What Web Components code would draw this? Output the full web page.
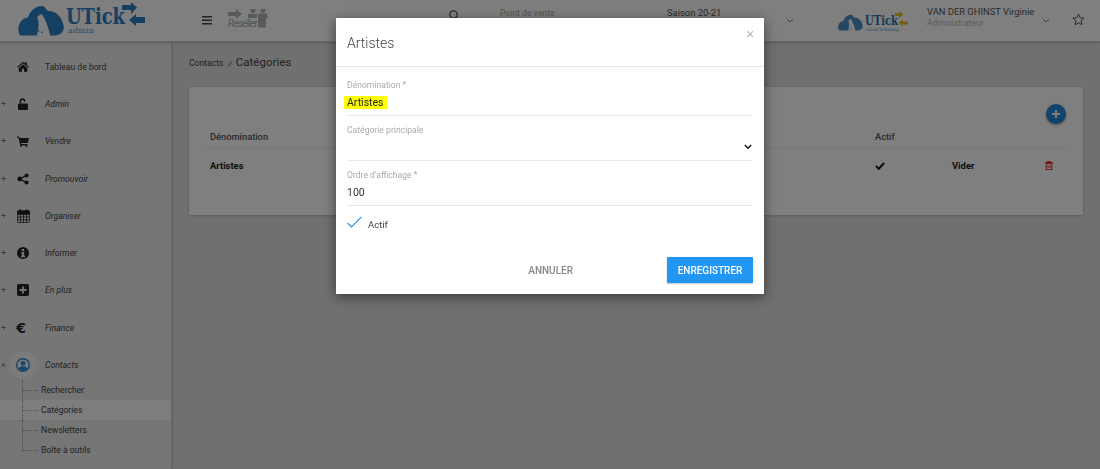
<!DOCTYPE html>
<html lang="fr">
<head>
<meta charset="utf-8">
<title>Catégories</title>
<style>
  html, body { margin: 0; height: 100%; overflow: hidden; }
  body { font-family: Roboto, "Liberation Sans", sans-serif; background: #e0e0e0; color: #333; }
  ut-layout svg { display: block; }
</style>
</head>
<body>
<ut-layout>
  <ut-header slot="header"></ut-header>
  <ut-sidebar slot="sidebar">
    <ut-nav-item label="Tableau de bord" plain>
      <svg width="12" height="11" viewBox="0 0 24 21" fill="currentColor"><path d="M12 1 0 11.500l1.400 1.600L12 4l10.600 9.100 1.400-1.600L19.500 7.600V2h-3.500v2.600zM12 6 3.500 13.300V21H10v-6h4v6h6.500v-7.700z"/></svg>
    </ut-nav-item>
    <ut-nav-item label="Admin" mark="+">
      <svg width="10" height="12" viewBox="0 0 20 24" fill="currentColor"><path d="M2 11h16a2 2 0 0 1 2 2v9a2 2 0 0 1-2 2H2a2 2 0 0 1-2-2v-9a2 2 0 0 1 2-2z"/><path d="M3.500 11V6a5.500 5.500 0 0 1 11 0v1.500h-3V6a2.500 2.500 0 0 0-5 0v5z"/></svg>
    </ut-nav-item>
    <ut-nav-item label="Vendre" mark="+">
      <svg width="12" height="11" viewBox="0 0 24 22" fill="currentColor"><path d="M0 1h4.500l.8 3H24l-2.500 10H8l.5 2H21v2.500H6.500L3 3.500H0z"/><circle cx="8.500" cy="20" r="2"/><circle cx="18.500" cy="20" r="2"/></svg>
    </ut-nav-item>
    <ut-nav-item label="Promouvoir" mark="+">
      <svg width="12" height="12" viewBox="0 0 22 22" fill="currentColor"><circle cx="5" cy="11" r="4.500"/><circle cx="17.500" cy="4.500" r="3.800"/><circle cx="17.500" cy="17.500" r="3.800"/><path d="M5 11 17.500 4.500M5 11l12.500 6.500" stroke="currentColor" stroke-width="2.400"/></svg>
    </ut-nav-item>
    <ut-nav-item label="Organiser" mark="+">
      <svg width="13" height="14" viewBox="0 0 20 22" fill="none" stroke="currentColor" stroke-width="1.200"><rect x=".7" y="3" width="18.600" height="18.300" rx="1.200"/><path d="M.7 8h18.600M.7 12.500h18.600M.7 17h18.600M5.300 8v13.300M10 8v13.300M14.700 8v13.300"/><path d="M.7 3h18.600v5H.7z" fill="currentColor"/><path d="M5 .5v4M15 .5v4" stroke-width="2"/></svg>
    </ut-nav-item>
    <ut-nav-item label="Informer" mark="+">
      <svg width="12" height="12" viewBox="0 0 20 20" fill="currentColor"><path fill-rule="evenodd" d="M10 0a10 10 0 1 0 0 20 10 10 0 0 0 0-20zM8 3.500h4v3H8zM7 8.500h5v6h1.500V17h-7v-2.500H8V11H7z"/></svg>
    </ut-nav-item>
    <ut-nav-item label="En plus" mark="+">
      <svg width="12" height="12" viewBox="0 0 20 20" fill="currentColor"><path fill-rule="evenodd" d="M3 0h14a3 3 0 0 1 3 3v14a3 3 0 0 1-3 3H3a3 3 0 0 1-3-3V3a3 3 0 0 1 3-3zm5.500 4v4.500H4v3h4.500V16h3v-4.500H16v-3h-4.500V4z"/></svg>
    </ut-nav-item>
    <ut-nav-item label="Finance" mark="+">
      <span class="euro" style="font:700 14px/14px 'DejaVu Sans',sans-serif;margin-left:-4px">€</span>
    </ut-nav-item>
    <ut-nav-item label="Contacts" mark="×" open>
      <svg width="14" height="14" viewBox="0 0 20 20" fill="none" stroke="#2f8fe0" stroke-width="2"><circle cx="10" cy="10" r="9"/><circle cx="10" cy="7.800" r="3.400" fill="#2f8fe0" stroke="none"/><path d="M3.800 15.500c1-3 3.600-3.800 6.200-3.800s5.200.8 6.200 3.800C14.500 17.500 12 18.500 10 18.500s-4.500-1-6.200-3z" fill="#2f8fe0" stroke="none"/></svg>
    </ut-nav-item>
    <ut-sub-nav>
      <ut-sub-item>Rechercher</ut-sub-item>
      <ut-sub-item active>Catégories</ut-sub-item>
      <ut-sub-item>Newsletters</ut-sub-item>
      <ut-sub-item last>Boîte à outils</ut-sub-item>
    </ut-sub-nav>
  </ut-sidebar>
  <ut-categories slot="main"></ut-categories>
</ut-layout>
<ut-modal heading="Artistes">
  <ut-field label="Dénomination *" value="Artistes" marked></ut-field>
  <ut-field label="Catégorie principale" select></ut-field>
  <ut-field label="Ordre d'affichage *" value="100"></ut-field>
  <ut-check>Actif</ut-check>
</ut-modal>

<script>
  // small helper so every component has the same shadow setup
  class Base extends HTMLElement {
    constructor() {
      super();
      this.attachShadow({ mode: 'open' });
    }
    connectedCallback() {
      this.render();
    }
  }

  const cloud = `<path d="M2.500 33C-1 30-.5 20 6 16c2-.5 3-1 4-1C12 8 18 3.500 24 3.500c3 0 4 3.500 6 5 7-.5 14 5.500 15.500 14.500C47 29 42 33 37 33h-5c-1-7-4-15-8-21-2-1.500-4 2-5 3 3 5 1 12 0 18z"/><path d="M17 26.500l1.500.7M20 28l1.500.7M23 29.500l1.500.7" stroke-width="1.200" fill="none"/>`;

  class UtLayout extends Base {
    render() {
      this.shadowRoot.innerHTML = `
        <style>
          :host { display: flex; flex-direction: column; height: 469px; }
          .body { display: flex; flex: 1; min-height: 0; }
        </style>
        <slot name="header"></slot>
        <div class="body">
          <slot name="sidebar"></slot>
          <slot name="main"></slot>
        </div>
      `;
    }
  }

  class UtHeader extends Base {
    render() {
      this.shadowRoot.innerHTML = `
        <style>
          :host { display: flex; align-items: center; height: 42px; box-sizing: border-box; background: #fff; border-bottom: 1px solid #cfcfcf; box-shadow: 0 1px 2px rgba(0,0,0,.2); position: relative; z-index: 2; flex: none; color: #555; font-size: 9.400px; }
          svg { display: block; flex: none; }
          .logo { margin-left: 18px; }
          .burger { margin-left: 56px; }
          .reseller { margin-left: 16px; }
          .search { margin-left: 179px; margin-top: -11px; }
          .pdv { margin-left: 40px; width: 167px; margin-top: -16px; color: #aaa; font-size: 8.600px; }
          .saison { width: 119px; margin-top: -16px; color: #555; }
          .chev { color: #888; }
          .small { margin-left: 44px; }
          .user { margin-left: 19px; width: 115px; line-height: 11.500px; margin-top: -6px; }
          .user div { white-space: nowrap; }
          .user .role { color: #bbb; font-size: 8.600px; }
          .star { margin-left: 22px; margin-top: -3px; }
        </style>
        <svg class="logo" width="128" height="41" viewBox="0 0 128 41">
          <g fill="#2a80c4" stroke="#2a80c4" stroke-width="0" transform="translate(0 2.500)">${cloud}</g>
          <text x="48" y="24" font-family="'DejaVu Serif', serif" font-weight="700" font-size="22" textLength="59" lengthAdjust="spacingAndGlyphs" fill="#2a80c4">UTick</text>
          <text x="50" y="33" font-family="'DejaVu Serif', serif" font-size="8" textLength="26" fill="#4f97d0">admin</text>
          <path d="M104 5h9V2l6 5.500-6 6.500v-4h-9z" fill="#2a80c4"/>
          <path d="M127 17h-9v-3l-7 6 7 6v-3h9z" fill="#2a80c4"/>
        </svg>
        <svg class="burger" width="10" height="9" viewBox="0 0 10 9" fill="#444"><path d="M0 0h10v1.600H0zM0 3.500h10v1.600H0zM0 7h10v1.600H0z"/></svg>
        <svg class="reseller" width="42" height="24" viewBox="0 0 42 24" fill="#b4b4b4">
          <path d="M0 3h8V0l6 5-6 5V7H0z"/>
          <circle cx="25" cy="1.500" r="2.500"/><circle cx="35" cy="1.500" r="2.500"/>
          <path d="M20 5h9v4h-9zM30 4.500h9l1 5h-2v9h-8z"/>
          <text x="0" y="18" font-family="Roboto, sans-serif" font-size="10" fill="#aaa" textLength="30">Reseller</text>
        </svg>
        <svg class="search" width="11" height="11" viewBox="0 0 11 11" fill="none" stroke="#555" stroke-width="1.300"><circle cx="4.500" cy="4.500" r="3.700"/><path d="M7.300 7.300 10.500 10.500"/></svg>
        <div class="pdv">Point de vente</div>
        <div class="saison">Saison 20-21</div>
        <svg class="chev" width="8" height="5" viewBox="0 0 8 5" fill="none" stroke="currentColor"><path d="M1 1l3 3 3-3"/></svg>
        <svg class="small" width="70" height="22" viewBox="0 0 70 22">
          <g fill="#4a8fc8" stroke="#4a8fc8" stroke-width="0" transform="translate(0 3) scale(.540 .530)">${cloud}</g>
          <text x="27" y="15" font-family="'DejaVu Serif', serif" font-weight="700" font-size="12.500" textLength="33" lengthAdjust="spacingAndGlyphs" fill="#2a6fb0">UTick</text>
          <text x="28" y="20.500" font-family="'DejaVu Serif', serif" font-size="4.500" textLength="33" fill="#6a9bc8">cloud ticketing</text>
          <path d="M57 3h4V1l4.500 3.500L61 8V6h-4z" fill="#e7c21e"/>
          <path d="M70 11.500h-5V9.500L60.500 13l4.500 3.500v-2h5z" fill="#e7c21e"/>
        </svg>
        <div class="user">
          <div>VAN DER GHINST Virginie</div>
          <div class="role">Administrateur</div>
        </div>
        <svg class="chev" width="8" height="5" viewBox="0 0 8 5" fill="none" stroke="currentColor"><path d="M1 1l3 3 3-3"/></svg>
        <svg class="star" width="13" height="13" viewBox="0 0 24 24" fill="none" stroke="#555" stroke-width="1.800"><path d="M12 2l3 6.800 7.300.7-5.500 4.900 1.600 7.300L12 17.900 5.600 21.700l1.600-7.300L1.700 9.500 9 8.800z"/></svg>
      `;
    }
  }

  class UtSidebar extends Base {
    render() {
      this.shadowRoot.innerHTML = `
        <style>
          :host { display: block; width: 172px; flex: none; box-sizing: border-box; padding-top: 6.300px; background: #ececec; border-right: 1px solid #cfcfcf; box-shadow: 1px 0 2px rgba(0,0,0,.12); }
        </style>
        <slot></slot>
      `;
    }
  }

  class UtNavItem extends Base {
    render() {
      const plain = this.hasAttribute('plain');
      this.shadowRoot.innerHTML = `
        <style>
          :host { display: flex; align-items: center; height: 37.250px; color: #444; }
          .mark { width: 15px; flex: none; font-size: 9px; color: #777; padding-left: 1px; box-sizing: border-box; }
          .icon { width: 16px; height: 28px; flex: none; display: flex; align-items: center; justify-content: center; position: relative; color: #222; }
          :host([open]) .icon::before { content: ""; position: absolute; left: -6px; top: 0; width: 28px; height: 28px; border-radius: 50%; background: #fff; opacity: .55; }
          ::slotted(*) { position: relative; }
          .label { margin-left: 14px; font-size: 8.600px; color: #444; font-style: ${plain ? 'normal' : 'italic'}; }
        </style>
        <span class="mark">${this.getAttribute('mark') || ''}</span>
        <span class="icon"><slot></slot></span>
        <span class="label">${this.getAttribute('label')}</span>
      `;
    }
  }

  class UtSubNav extends Base {
    render() {
      this.shadowRoot.innerHTML = `
        <style>
          :host { display: block; margin-top: -3.500px; }
        </style>
        <slot></slot>
      `;
    }
  }

  class UtSubItem extends Base {
    render() {
      this.shadowRoot.innerHTML = `
        <style>
          :host { display: flex; align-items: center; height: 20px; position: relative; font-size: 8.600px; color: #444; padding-left: 41px; }
          :host([active]) { background: #fafafa; }
          .tree { position: absolute; left: 22px; top: 0; bottom: 0; width: 15px; border-left: 1px dotted #999; }
          :host([last]) .tree { bottom: 9px; }
          .tree::after { content: ""; position: absolute; left: 0; right: 0; top: 10px; border-top: 1px dotted #999; }
        </style>
        <span class="tree"></span>
        <slot></slot>
      `;
    }
  }

  class UtCategories extends Base {
    render() {
      this.shadowRoot.innerHTML = `
        <style>
          :host { display: block; flex: 1; box-sizing: border-box; padding: 13px 17px 0; color: #444; min-width: 0; }
          .crumbs { display: flex; align-items: baseline; height: 16px; font-size: 8.600px; }
          .crumbs i { margin: 0 4px 0 5px; font-size: 8px; }
          .crumbs b { font-weight: 400; font-size: 11.400px; letter-spacing: .1px; }
          .card { margin-top: 16px; height: 128px; background: #fff; border-radius: 2px; box-shadow: 0 1px 3px rgba(0,0,0,.2); position: relative; box-sizing: border-box; padding: 38px 18px 0; }
          .row { display: grid; grid-template-columns: 665px 77px 93px 1fr; padding-left: 3px; align-items: center; }
          .head { height: 23px; font-size: 9.300px; font-weight: 500; color: #555; border-bottom: 1px solid #eee; }
          .body { height: 33px; font-size: 9.400px; font-weight: 700; color: #222; }
          svg { display: block; }
          .fab { position: absolute; right: 17px; top: 17px; width: 20px; height: 20px; border-radius: 50%; background: #2587d8; box-shadow: 0 1px 3px rgba(0,0,0,.4); display: flex; align-items: center; justify-content: center; }
        </style>
        <div class="crumbs"><span>Contacts</span><i>/</i><b>Catégories</b></div>
        <div class="card">
          <div class="fab"><svg width="8" height="8" viewBox="0 0 8 8" fill="#fff"><path d="M3 0h2v3h3v2H5v3H3V5H0V3h3z"/></svg></div>
          <div class="row head"><span>Dénomination</span><span>Actif</span><span></span><span></span></div>
          <div class="row body">
            <span>Artistes</span>
            <span><svg width="10" height="8" viewBox="0 0 10 8" fill="none" stroke="#111" stroke-width="2"><path d="M1 4l2.800 2.800L9 1"/></svg></span>
            <span>Vider</span>
            <span><svg width="8" height="9" viewBox="0 0 8 9" fill="none" stroke="#e53935" stroke-width="1.100"><path d="M1.200 2.500h5.600V8.500H1.200zM0 1.500h8M2.800 1.500V.5h2.400v1M3 4v3M5 4v3"/></svg></span>
          </div>
        </div>
      `;
    }
  }

  class UtModal extends Base {
    render() {
      this.shadowRoot.innerHTML = `
        <style>
          :host { position: fixed; inset: 0; background: rgba(0,0,0,.5); display: flex; justify-content: center; align-items: flex-start; z-index: 10; }
          .panel { margin-top: 18px; width: 428px; height: 276px; box-sizing: border-box; background: #fff; box-shadow: 0 3px 12px rgba(0,0,0,.5); display: flex; flex-direction: column; color: #333; }
          .top { height: 49px; flex: none; border-bottom: 1px solid #e9e9e9; display: flex; align-items: center; justify-content: space-between; box-sizing: border-box; padding: 1px 11px 0; }
          h2 { margin: 0; font-size: 14px; font-weight: 300; color: #444; }
          .close { font-size: 14px; color: #bbb; margin-top: -17px; line-height: 14px; margin-right: -1px; }
          .form { padding: 9px 11px 0; flex: 1; }
          .foot { display: flex; justify-content: flex-end; align-items: center; padding: 0 11px; height: 26px; margin-bottom: 11px; gap: 94px; }
          .cancel { font-size: 10px; font-weight: 500; color: #888; }
          .save { width: 86px; height: 26px; background: #2196f3; color: #fff; font-size: 10px; font-weight: 500; display: flex; align-items: center; justify-content: center; border-radius: 1px; box-shadow: 0 1px 2px rgba(0,0,0,.25); }
        </style>
        <div class="panel">
          <div class="top"><h2>${this.getAttribute('heading')}</h2><span class="close">×</span></div>
          <div class="form"><slot></slot></div>
          <div class="foot"><span class="cancel">ANNULER</span><span class="save">ENREGISTRER</span></div>
        </div>
      `;
    }
  }

  class UtField extends Base {
    render() {
      const select = this.hasAttribute('select');
      const value = this.getAttribute('value') || '';
      this.shadowRoot.innerHTML = `
        <style>
          :host { display: block; height: 45px; box-sizing: border-box; padding-top: 4px; position: relative; }
          label { display: block; font-size: 8.600px; line-height: 11px; color: #aaa; }
          .value { box-sizing: border-box; height: 24px; padding-top: 2px; border-bottom: 1px solid #e9e9e9; font-size: 10.500px; line-height: 13px; color: #333; display: flex; justify-content: space-between; align-items: center; padding-bottom: 4px; margin-top: 1px; }
          mark { background: #ffff00; color: #222; padding: 0 3px; margin-left: -3px; }
          svg { display: block; margin-right: 1px; margin-top: -1px; }
        </style>
        <label>${this.getAttribute('label')}</label>
        <div class="value">
          ${this.hasAttribute('marked') ? `<mark>${value}</mark>` : `<span>${value}</span>`}
          ${select ? '<svg width="8" height="6" viewBox="0 0 8 6" fill="none" stroke="#111" stroke-width="1.400"><path d="M.8 1l3.200 3.200L7.200 1"/></svg>' : ''}
        </div>
      `;
    }
  }

  class UtCheck extends Base {
    render() {
      this.shadowRoot.innerHTML = `
        <style>
          :host { display: flex; align-items: center; height: 26px; font-size: 9.500px; color: #444; box-sizing: border-box; }
          svg { display: block; margin-right: 6px; margin-top: -5px; }
        </style>
        <svg width="15" height="12" viewBox="0 0 15 12" fill="none" stroke="#2196f3" stroke-width="1.100"><path d="M.5 7l4 4L14.500 .8"/></svg>
        <slot></slot>
      `;
    }
  }

  customElements.define('ut-layout', UtLayout);
  customElements.define('ut-header', UtHeader);
  customElements.define('ut-sidebar', UtSidebar);
  customElements.define('ut-nav-item', UtNavItem);
  customElements.define('ut-sub-nav', UtSubNav);
  customElements.define('ut-sub-item', UtSubItem);
  customElements.define('ut-categories', UtCategories);
  customElements.define('ut-modal', UtModal);
  customElements.define('ut-field', UtField);
  customElements.define('ut-check', UtCheck);
</script>
</body>
</html>
